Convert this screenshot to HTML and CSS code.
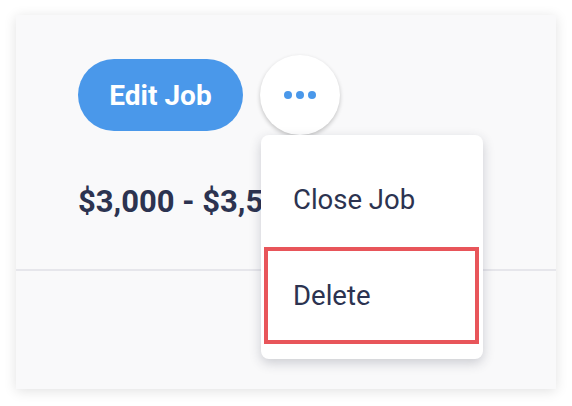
FILE: index.html
```html
<!DOCTYPE html>
<html>
<head>
<meta charset="utf-8">
<link rel="stylesheet" href="styles.css">
</head>
<body>
  <div class="page">
    <div class="card">
      <div class="card-top">
        <div class="actions">
          <button class="edit-btn">Edit Job</button>
          <div class="more-wrap">
            <button class="more-btn"><span class="dot"></span><span class="dot"></span><span class="dot"></span></button>
            <ul class="menu">
              <li class="menu-item">Close Job</li>
              <li class="menu-item active">Delete</li>
            </ul>
          </div>
        </div>
        <div class="price">$3,000 - $3,500</div>
      </div>
      <div class="card-bottom"></div>
    </div>
  </div>
</body>
</html>
```

FILE: styles.css
```css
  body {
    margin: 0;
    background: #ffffff;
    font-family: Roboto, "Liberation Sans", sans-serif;
  }
  .page {
    padding: 15px 16px;
  }
  .card {
    background: #f9f9fa;
    height: 374px;
    box-shadow: 0 2px 12px rgba(0, 0, 0, 0.12);
  }
  .card-top {
    padding: 40px 0 49px 62px;
    border-bottom: 2px solid #e6e6eb;
  }
  .actions {
    display: flex;
    align-items: center;
    gap: 17px;
    height: 80px;
  }
  .edit-btn {
    width: 165px;
    height: 72px;
    border: 0;
    border-radius: 36px;
    background: #4a98ea;
    color: #ffffff;
    font-family: Roboto, "Liberation Sans", sans-serif;
    font-size: 28px;
    font-weight: bold;
    padding: 0;
  }
  .more-wrap {
    position: relative;
  }
  .more-btn {
    width: 80px;
    height: 80px;
    border: 0;
    border-radius: 50%;
    background: #ffffff;
    box-shadow: 0 2px 4px rgba(0, 0, 0, 0.22);
    display: flex;
    align-items: center;
    justify-content: center;
    gap: 4px;
    padding: 0;
  }
  .dot {
    width: 8px;
    height: 8px;
    border-radius: 50%;
    background: #4a98ea;
  }
  .menu {
    position: absolute;
    top: 80px;
    left: 1px;
    width: 222px;
    margin: 0;
    padding: 16px 0 15px 0;
    list-style: none;
    background: #ffffff;
    border-radius: 8px;
    box-shadow: 0 4px 12px rgba(40, 45, 70, 0.22);
    z-index: 2;
  }
  .menu-item {
    height: 96px;
    display: flex;
    align-items: center;
    padding-left: 32px;
    font-size: 27.5px;
    color: #2c3350;
  }
  .menu-item.active {
    box-sizing: border-box;
    height: 97px;
    margin: 0 4px 0 3px;
    padding-left: 25px;
    border: 4px solid #e8555a;
  }
  .price {
    margin-top: 49px;
    line-height: 36px;
    font-size: 31px;
    font-weight: bold;
    color: #2c3350;
  }
```
